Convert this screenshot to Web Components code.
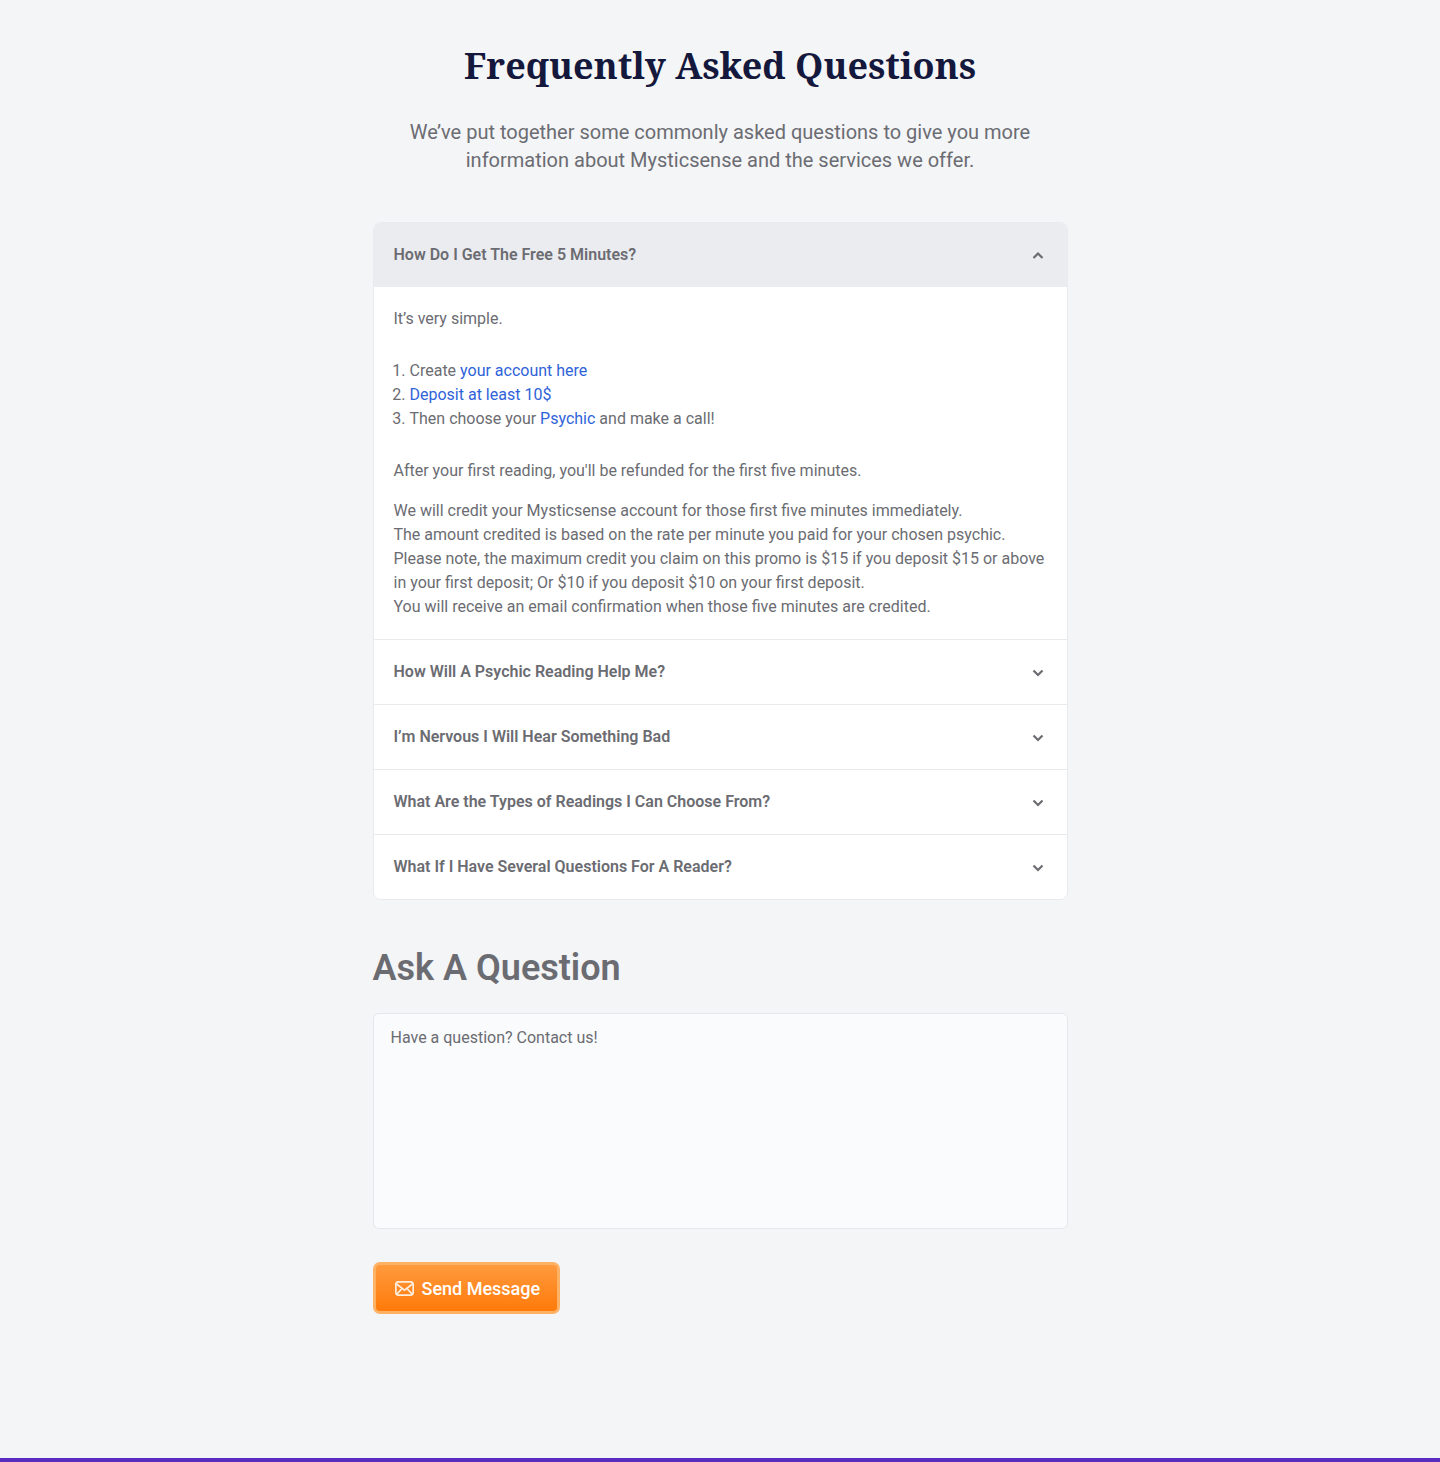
<!DOCTYPE html>
<html><head><meta charset="utf-8"><style>
html,body{margin:0;padding:0}
body{background:#f4f5f7;font-family:Roboto,sans-serif;color:#6b6c72}
a{color:#2f63d9}
</style></head><body>
<faq-page>
  <faq-header slot="header" heading="Frequently Asked Questions">We’ve put together some commonly asked questions to give you more information about Mysticsense and the services we offer.</faq-header>
  <faq-accordion>
    <faq-item question="How Do I Get The Free 5 Minutes?" open>
      <p class="gap">It’s very simple.</p>
      <ol>
        <li>Create <a>your account here</a></li>
        <li><a>Deposit at least 10$</a></li>
        <li>Then choose your <a>Psychic</a> and make a call!</li>
      </ol>
      <p>After your first reading, you'll be refunded for the first five minutes.</p>
      <p>We will credit your Mysticsense account for those first five minutes immediately.<br>The amount credited is based on the rate per minute you paid for your chosen psychic.<br>Please note, the maximum credit you claim on this promo is $15 if you deposit $15 or above in your first deposit; Or $10 if you deposit $10 on your first deposit.<br>You will receive an email confirmation when those five minutes are credited.</p>
    </faq-item>
    <faq-item question="How Will A Psychic Reading Help Me?"></faq-item>
    <faq-item question="I’m Nervous I Will Hear Something Bad"></faq-item>
    <faq-item question="What Are the Types of Readings I Can Choose From?"></faq-item>
    <faq-item question="What If I Have Several Questions For A Reader?"></faq-item>
  </faq-accordion>
  <ask-form></ask-form>
</faq-page>
<script>
const mk=(name,html,setup)=>customElements.define(name,class extends HTMLElement{
  connectedCallback(){ if(this.shadowRoot)return; const r=this.attachShadow({mode:'open'}); r.innerHTML=html(this); setup&&setup(r,this);}
});
mk('faq-page',()=>`<style>
:host{display:block;min-height:1462px;box-sizing:border-box;border-bottom:4px solid #5a2bbf;}
.wrap{width:695px;margin:0 auto;padding-top:41px}
</style><div class="wrap"><slot name="header"></slot><slot></slot></div>`);
mk('faq-header',h=>`<style>
:host{display:block;text-align:center}
h1{margin:0;font:700 36px/50px "Noto Serif","DejaVu Serif",serif;color:#14183c}
p{margin:27px auto 0;width:640px;font:400 20px/28px Roboto,sans-serif;color:#6b6c72}
</style><h1>${h.getAttribute('heading')}</h1><p><slot></slot></p>`);
mk('faq-accordion',()=>`<style>
:host{display:block;margin-top:48px;background:#fff;border:1px solid #e9eaee;border-radius:8px;overflow:hidden;box-sizing:border-box}
</style><slot></slot>`);
const up='<path d="M1.5 7 6 2.5 10.5 7"/>',down='<path d="M1.5 2.5 6 7 10.5 2.5"/>';
mk('faq-item',h=>{const open=h.hasAttribute('open');return `<style>
:host{display:block;border-top:1px solid #e9eaee}
:host(:first-child){border-top:0}
.q{display:flex;align-items:center;justify-content:space-between;height:64px;padding:0 22.5px 0 20px;font:600 16px/24px Roboto,sans-serif;color:#6b6c72;background:${open?'#ebecf0':'#fff'}}
svg{width:12px;height:10px;fill:none;stroke:#6b6c72;stroke-width:2.2;margin-top:2px}
.a{display:${open?'block':'none'};padding:20px 20px 20px;font:400 16px/24px Roboto,sans-serif;color:#6b6c72}
::slotted(p){margin:0 0 16px}
::slotted(p:last-child){margin-bottom:0}
::slotted(p.gap){margin-bottom:28px}
::slotted(ol){margin:0 0 28px;padding:0 0 0 16px}
</style><div class="q"><span>${h.getAttribute('question')}</span><svg viewBox="0 0 12 10">${open?up:down}</svg></div><div class="a"><slot></slot></div>`});
mk('ask-form',()=>`<style>
:host{display:block;margin-top:47px}
h2{margin:0;font:600 36px/42px Roboto,sans-serif;color:#6b6c72}
.box{margin-top:24px;height:216px;box-sizing:border-box;background:#fafbfd;border:1px solid #e6e7eb;border-radius:6px;padding:12px 17px;font:400 16px/24px Roboto,sans-serif;color:#6b6c72}
button{margin-top:33px;display:inline-flex;align-items:center;gap:8px;width:187px;height:52px;box-sizing:border-box;padding:1px 0 0 19px;border:3px solid #ffb264;border-radius:7px;background:linear-gradient(#ff9a3e,#ff7a0a);color:#fff;font:500 18px/24px Roboto,sans-serif}
svg{width:19px;height:19px;fill:none;stroke:#ffeedd;stroke-width:1.6}
</style><h2>Ask A Question</h2><div class="box">Have a question? Contact us!</div>
<button><svg viewBox="0 0 18 18"><rect x="0.8" y="2.8" width="16.4" height="12.4" rx="2.5"/><path d="M1.2 4.5 9 10.5 16.8 4.5M1.5 14.5 6.7 9M16.5 14.5 11.3 9"/></svg>Send Message</button>`);
</script>
</body></html>
